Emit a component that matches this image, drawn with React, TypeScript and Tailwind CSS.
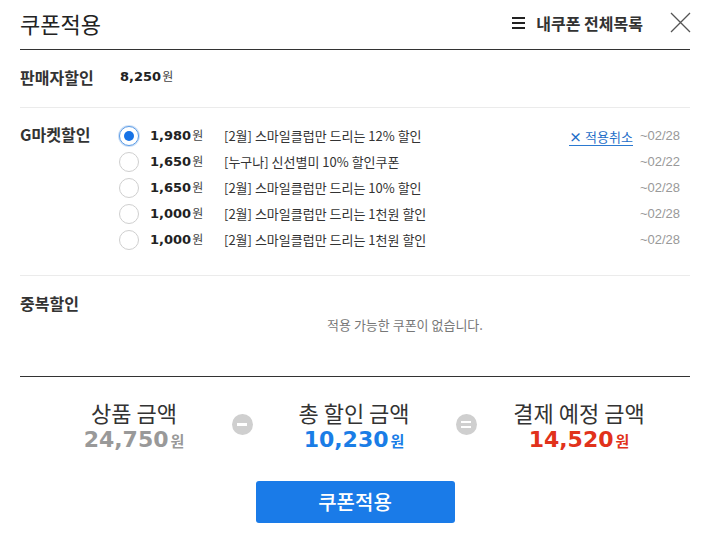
import React from "react";

const KR = "font-['Noto_Sans_CJK_KR','Noto_Sans',sans-serif]";
const NUM = "font-['DejaVu_Sans','Noto_Sans_CJK_KR',sans-serif]";

const coupons = [
  { amt: "1,980", desc: "[2월] 스마일클럽만 드리는 12% 할인", date: "~02/28", sel: true },
  { amt: "1,650", desc: "[누구나] 신선별미 10% 할인쿠폰", date: "~02/22" },
  { amt: "1,650", desc: "[2월] 스마일클럽만 드리는 10% 할인", date: "~02/28" },
  { amt: "1,000", desc: "[2월] 스마일클럽만 드리는 1천원 할인", date: "~02/28" },
  { amt: "1,000", desc: "[2월] 스마일클럽만 드리는 1천원 할인", date: "~02/28" },
];

function Radio({ on }: { on?: boolean }) {
  return on ? (
    <div className="w-[20px] h-[20px] rounded-full border border-[#5a9be6] bg-white flex items-center justify-center shadow-[0_0_0_1px_#cfe1f7]">
      <div className="w-[10px] h-[10px] rounded-full bg-[#1672e6]" />
    </div>
  ) : (
    <div className="w-[20px] h-[20px] rounded-full border border-[#cfcfcf] bg-white" />
  );
}

export default function App() {
  return (
    <div className={`w-[710px] h-[558px] bg-white px-5 ${KR} text-[#222]`}>
      {/* header */}
      <div className="h-[50px] border-b border-[#333] flex items-center justify-between pb-[4px]">
        <div className="text-[22px] leading-none text-[#222]">쿠폰적용</div>
        <div className="flex items-center">
          <div className="flex items-center mr-[27px]">
            <div className="flex flex-col gap-[3px] mr-[11px]">
              <div className="w-[13px] h-[2px] bg-[#222]" />
              <div className="w-[13px] h-[2px] bg-[#222]" />
              <div className="w-[13px] h-[2px] bg-[#222]" />
            </div>
            <span className="text-[16px] font-bold text-[#333] leading-none">내쿠폰 전체목록</span>
          </div>
          <svg width="21" height="21" viewBox="0 0 21 21" className="mr-[-1px]">
            <path d="M1 1 L20 20 M20 1 L1 20" stroke="#555" strokeWidth="1.3" fill="none" />
          </svg>
        </div>
      </div>

      {/* seller discount */}
      <div className="h-[58px] border-b border-[#ebebeb] flex items-center pb-[3px]">
        <div className="w-[100px] text-[16px] font-bold text-[#333]">판매자할인</div>
        <div className="flex items-baseline">
          <span className={`${NUM} text-[13px] font-bold text-[#222]`}>8,250</span>
          <span className="text-[12px] text-[#444] ml-[1px]">원</span>
        </div>
      </div>

      {/* gmarket discount */}
      <div className="border-b border-[#ebebeb] flex pt-[15px] pb-[22px]">
        <div className="w-[99px] h-[26px] flex items-center text-[16px] font-bold text-[#333] -mt-[2px]">G마켓할인</div>
        <div className="flex-1 flex flex-col">
          {coupons.map((c, i) => (
            <div key={i} className="h-[26px] flex items-center">
              <Radio on={c.sel} />
              <div className="w-[74px] ml-[11px] flex items-baseline">
                <span className={`${NUM} text-[13px] font-bold text-[#222]`}>{c.amt}</span>
                <span className="text-[12px] text-[#444] ml-[1px]">원</span>
              </div>
              <div className="flex-1 text-[13px] text-[#333]">{c.desc}</div>
              {c.sel && (
                <div className="flex items-center border-b border-[#2b79d0] text-[#1e6ec8] text-[13px] leading-[17px] mr-[7px] mt-[2px]">
                  <span className="font-bold text-[13px] mr-[3px] leading-none">×</span>
                  <span>적용취소</span>
                </div>
              )}
              <div className="text-[13px] text-[#999] font-['Liberation_Sans',sans-serif] mr-[10px]">{c.date}</div>
            </div>
          ))}
        </div>
      </div>

      {/* duplicate discount */}
      <div className="h-[101px] border-b border-[#333] flex">
        <div className="w-[100px] pt-[16px] text-[16px] font-bold text-[#333] leading-[22px]">중복할인</div>
        <div className="flex-1 pt-[40px] text-center text-[13px] text-[#777] leading-[18px]">적용 가능한 쿠폰이 없습니다.</div>
      </div>

      {/* summary */}
      <div className="flex items-center pt-[22px] pl-[24px]">
        <div className="w-[180px] flex flex-col items-center">
          <div className="text-[22px] leading-[27px] text-[#333]">상품 금액</div>
          <div className="flex items-baseline leading-[28px]">
            <span className={`${NUM} text-[22px] font-bold text-[#999]`}>24,750</span>
            <span className="text-[15px] font-bold text-[#999] ml-[2px]">원</span>
          </div>
        </div>
        <div className="w-[36px] flex justify-center -mt-[6px]">
          <div className="w-[21px] h-[21px] rounded-full bg-[#cfcfcf] flex items-center justify-center">
            <div className="w-[10px] h-[3px] bg-white" />
          </div>
        </div>
        <div className="w-[188px] flex flex-col items-center">
          <div className="text-[22px] leading-[27px] text-[#333]">총 할인 금액</div>
          <div className="flex items-baseline leading-[28px]">
            <span className={`${NUM} text-[22px] font-bold text-[#1a7de6]`}>10,230</span>
            <span className="text-[15px] font-bold text-[#1a7de6] ml-[2px]">원</span>
          </div>
        </div>
        <div className="w-[36px] flex justify-center -mt-[6px]">
          <div className="w-[21px] h-[21px] rounded-full bg-[#cfcfcf] flex flex-col items-center justify-center gap-[3px]">
            <div className="w-[10px] h-[2px] bg-white" />
            <div className="w-[10px] h-[2px] bg-white" />
          </div>
        </div>
        <div className="w-[190px] flex flex-col items-center">
          <div className="text-[22px] leading-[27px] text-[#333]">결제 예정 금액</div>
          <div className="flex items-baseline leading-[28px]">
            <span className={`${NUM} text-[22px] font-bold text-[#e1321b]`}>14,520</span>
            <span className="text-[15px] font-bold text-[#e1321b] ml-[2px]">원</span>
          </div>
        </div>
      </div>

      <div className="flex justify-center mt-[26px]">
        <button className="w-[199px] h-[42px] rounded-[3px] bg-[#1a7be8] text-white text-[20px] font-medium flex items-center justify-center">
          쿠폰적용
        </button>
      </div>
    </div>
  );
}
